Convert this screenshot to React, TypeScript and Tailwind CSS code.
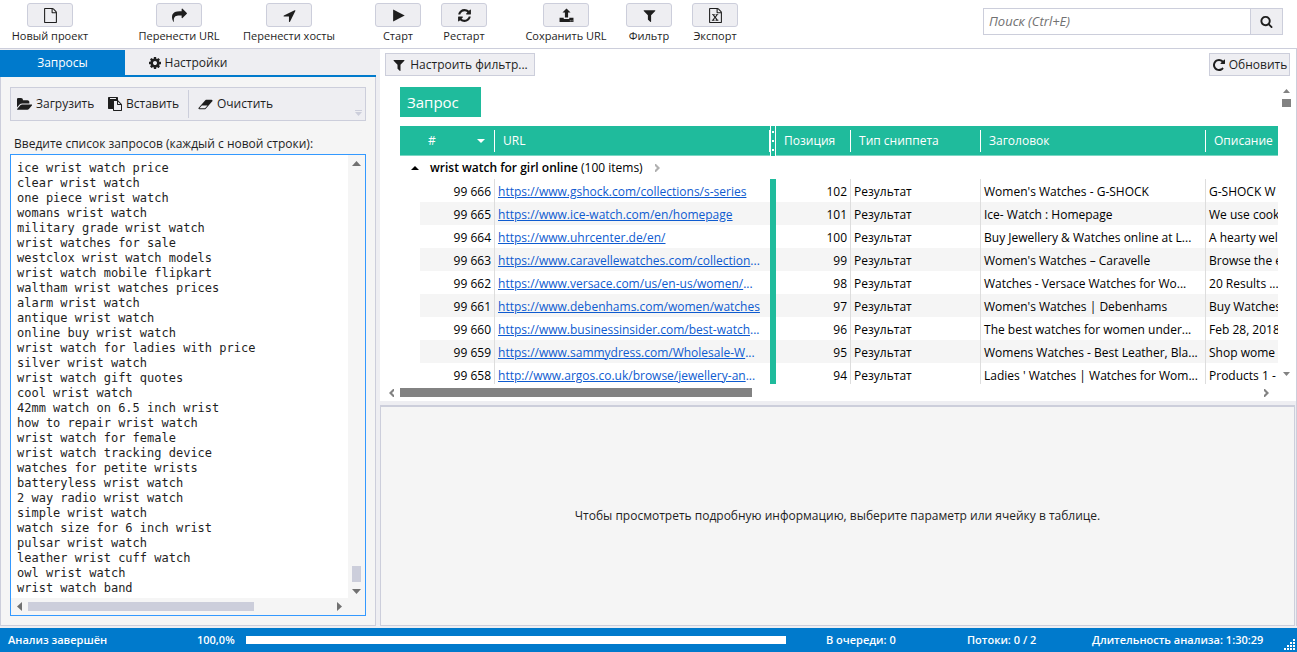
import React from 'react';
import clsx from 'clsx';

interface IconProps {
  d: string;
  size?: number;
  viewBox?: string;
}

const Icon = ({ d, size = 14, viewBox = '0 0 1792 1792' }: IconProps) => (
  <svg width={size} height={size} viewBox={viewBox} fill="currentColor" className="shrink-0" aria-hidden="true">
    <path d={d} />
  </svg>
);

const ICONS = {
  file: 'M1596 380q28 28 48 76t20 88v1152q0 40-28 68t-68 28h-1344q-40 0-68-28t-28-68v-1600q0-40 28-68t68-28h896q40 0 88 20t76 48zm-444-244v376h376q-10-29-22-41l-313-313q-12-12-41-22zm384 1528v-1024h-416q-40 0-68-28t-28-68v-416h-768v1536h1280z',
  excel: 'M1596 380q28 28 48 76t20 88v1152q0 40-28 68t-68 28h-1344q-40 0-68-28t-28-68v-1600q0-40 28-68t68-28h896q40 0 88 20t76 48zm-444-244v376h376q-10-29-22-41l-313-313q-12-12-41-22zm384 1528v-1024h-416q-40 0-68-28t-28-68v-416h-768v1536h1280zM480 740h330v110h-70l120 170 120-170h-70v-110h310v110h-80l-200 265 215 285h85v110h-340v-110h80l-140-195-140 195h80v110h-320v-110h85l215-285-200-265h-80z',
  share: 'M1792 640q0 26-19 45l-512 512q-19 19-45 19t-45-19-19-45v-256h-224q-98 0-175.5 6t-154 21.5-133 42.5-105.5 69.5-80 101-48.5 138.5-17.5 181q0 55 5 123 0 6 2.5 23.5t2.5 26.5q0 15-8.5 25t-23.5 10q-16 0-28-17-7-9-13-22t-13.5-30-10.5-24q-127-285-127-451 0-199 53-333 162-403 875-403h224v-256q0-26 19-45t45-19 45 19l512 512q19 19 19 45z',
  arrow: 'M1593 349l-640 1280q-17 35-57 35-5 0-15-2-22-5-35.5-22.5t-13.5-39.5v-576h-576q-22 0-39.5-13.5t-22.5-35.5 4-42 29-30l1280-640q13-7 29-7 27 0 45 19 15 14 18.5 34.5t-6.5 39.5z',
  play: 'M256 180L1640 896L256 1612Z',
  refresh: 'M1639 1056q0 5-1 7-64 268-268 434.5t-478 166.5q-146 0-282.5-55t-243.5-157l-129 129q-19 19-45 19t-45-19-19-45v-448q0-26 19-45t45-19h448q26 0 45 19t19 45-19 45l-137 137q71 66 161 102t187 36q134 0 250-65t186-179q11-17 53-117 8-23 30-23h192q13 0 22.5 9.5t9.5 22.5zm25-800v448q0 26-19 45t-45 19h-448q-26 0-45-19t-19-45 19-45l138-138q-148-137-349-137-134 0-250 65t-186 179q-11 17-53 117-8 23-30 23h-199q-13 0-22.5-9.5t-9.5-22.5v-7q65-268 270-434.5t480-166.5q146 0 284 55.5t245 156.5l130-129q19-19 45-19t45 19 19 45z',
  upload: 'M64 1160h500v100q0 60 60 60h544q60 0 60-60v-100h500v504h-1664zm1230 320v110h110v-110zm210 0v110h110v-110zM896 64l480 480h-290v600h-380v-600h-290z',
  filter: 'M1595 295q17 41-14 70l-493 493v742q0 42-39 59-13 5-25 5-27 0-45-19l-256-256q-19-19-19-45v-486l-493-493q-31-29-14-70 17-39 59-39h1280q42 0 59 39z',
  search: 'M1216 832q0-185-131.5-316.5t-316.5-131.5-316.5 131.5-131.5 316.5 131.5 316.5 316.5 131.5 316.5-131.5 131.5-316.5zm512 832q0 52-38 90t-90 38q-54 0-90-38l-343-342q-179 124-399 124-143 0-273.5-55.5t-225-150-150-225-55.5-273.5 55.5-273.5 150-225 225-150 273.5-55.5 273.5 55.5 225 150 150 225 55.5 273.5q0 220-124 399l343 343q37 37 37 90z',
  cog: 'M1152 896q0-106-75-181t-181-75-181 75-75 181 75 181 181 75 181-75 75-181zm512-109v222q0 12-8 23t-20 13l-185 28q-19 54-39 91 35 50 107 138 10 12 10 25t-9 23q-27 37-99 108t-94 71q-12 0-26-9l-138-108q-44 23-91 38-16 136-29 186-7 28-36 28h-222q-14 0-24.5-8.5t-11.5-21.5l-28-184q-49-16-90-37l-141 107q-10 9-25 9-14 0-25-11-126-114-165-168-7-10-7-23 0-12 8-23 15-21 51-66.5t54-70.5q-27-50-41-99l-183-27q-13-2-21-12.5t-8-23.5v-222q0-12 8-23t19-13l186-28q14-46 39-92-40-57-107-138-10-12-10-24 0-10 9-23 26-36 98.5-107.5t94.5-71.5q13 0 26 10l138 107q44-23 91-38 16-136 29-186 7-28 36-28h222q14 0 24.5 8.5t11.5 21.5l28 184q49 16 90 37l142-107q9-9 24-9 13 0 25 10 129 119 165 170 7 8 7 22 0 12-8 23-15 21-51 66.5t-54 70.5q26 50 41 98l183 28q13 2 21 12.5t8 23.5z',
  folder: 'M1815 952q0 31-31 66l-336 396q-43 51-120.5 86.5t-143.5 35.5h-1088q-34 0-60.5-13t-26.5-43q0-31 31-66l336-396q43-51 120.5-86.5t143.5-35.5h1088q34 0 60.5 13t26.5 43zm-343-344v160h-832q-94 0-197 47.5t-164 119.5l-337 396-5 6q0-4-.5-12.5t-.5-12.5v-960q0-92 66-158t158-66h320q92 0 158 66t66 158v32h544q92 0 158 66t66 158z',
  paste: 'M768 1664h896v-640h-416q-40 0-68-28t-28-68v-416h-384v1152zm256-1440v-64q0-13-9.5-22.5t-22.5-9.5h-704q-13 0-22.5 9.5t-9.5 22.5v64q0 13 9.5 22.5t22.5 9.5h704q13 0 22.5-9.5t9.5-22.5zm256 672h299l-299-299v299zm512 128v672q0 40-28 68t-68 28h-960q-40 0-68-28t-28-68v-160h-544q-40 0-68-28t-28-68v-1344q0-40 28-68t68-28h1088q40 0 68 28t28 68v328q21 13 36 28l408 408q28 28 48 76t20 88z',
  eraser: 'M960 1408l336-384h-768l-336 384h768zm1013-1077q15 34 9.5 71.5t-30.5 65.5l-896 1024q-38 44-96 44h-768q-38 0-69.5-20.5t-47.5-54.5q-15-34-9.5-71.5t30.5-65.5l896-1024q38-44 96-44h768q38 0 69.5 20.5t47.5 54.5z',
  redo: 'M1664 256v448q0 26-19 45t-45 19h-448q-42 0-59-40-17-39 14-69l138-138q-148-137-349-137-104 0-198.5 40.5t-163.5 109.5-109.5 163.5-40.5 198.5 40.5 198.5 109.5 163.5 163.5 109.5 198.5 40.5q119 0 225-52t179-147q7-10 23-12 15 0 25 9l137 138q9 8 9.5 20.5t-7.5 22.5q-109 132-264 204.5t-327 72.5q-156 0-298-61t-245-164-164-245-61-298 61-298 164-245 245-164 298-61q147 0 284.5 55.5t244.5 156.5l130-129q29-31 70-14 39 17 39 59z',
};

const TOOLBAR = [
  { label: 'Новый проект', icon: ICONS.file, box: 'w-[76px] ml-3' },
  { label: 'Перенести URL', icon: ICONS.share, box: 'w-[78px] ml-[52px]' },
  { label: 'Перенести хосты', icon: ICONS.arrow, box: 'w-[88px] ml-[27px]' },
  { label: 'Старт', icon: ICONS.play, box: 'w-[46px] ml-[42px]' },
  { label: 'Рестарт', icon: ICONS.refresh, box: 'w-[46px] ml-5' },
  { label: 'Сохранить URL', icon: ICONS.upload, box: 'w-[78px] ml-10' },
  { label: 'Фильтр', icon: ICONS.filter, box: 'w-[46px] ml-[21px]' },
  { label: 'Экспорт', icon: ICONS.excel, box: 'w-[46px] ml-5' },
];

const QUERIES = [
  'ice wrist watch price',
  'clear wrist watch',
  'one piece wrist watch',
  'womans wrist watch',
  'military grade wrist watch',
  'wrist watches for sale',
  'westclox wrist watch models',
  'wrist watch mobile flipkart',
  'waltham wrist watches prices',
  'alarm wrist watch',
  'antique wrist watch',
  'online buy wrist watch',
  'wrist watch for ladies with price',
  'silver wrist watch',
  'wrist watch gift quotes',
  'cool wrist watch',
  '42mm watch on 6.5 inch wrist',
  'how to repair wrist watch',
  'wrist watch for female',
  'wrist watch tracking device',
  'watches for petite wrists',
  'batteryless wrist watch',
  '2 way radio wrist watch',
  'simple wrist watch',
  'watch size for 6 inch wrist',
  'pulsar wrist watch',
  'leather wrist cuff watch',
  'owl wrist watch',
  'wrist watch band',
];

interface ResultRow {
  id: string;
  url: string;
  cut?: boolean;
  position: number;
  title: string;
  description: string;
}

const ROWS: ResultRow[] = [
  { id: '99 666', url: 'https://www.gshock.com/collections/s-series', position: 102, title: "Women's Watches - G-SHOCK", description: 'G-SHOCK W' },
  { id: '99 665', url: 'https://www.ice-watch.com/en/homepage', position: 101, title: 'Ice- Watch : Homepage', description: 'We use cook' },
  { id: '99 664', url: 'https://www.uhrcenter.de/en/', position: 100, title: 'Buy Jewellery & Watches online at L...', description: 'A hearty wel' },
  { id: '99 663', url: 'https://www.caravellewatches.com/collection', cut: true, position: 99, title: "Women's Watches – Caravelle", description: 'Browse the e' },
  { id: '99 662', url: 'https://www.versace.com/us/en-us/women/', cut: true, position: 98, title: 'Watches - Versace Watches for Wo...', description: '20 Results ...' },
  { id: '99 661', url: 'https://www.debenhams.com/women/watches', position: 97, title: "Women's Watches | Debenhams", description: 'Buy Watches' },
  { id: '99 660', url: 'https://www.businessinsider.com/best-watch', cut: true, position: 96, title: 'The best watches for women under...', description: 'Feb 28, 2018' },
  { id: '99 659', url: 'https://www.sammydress.com/Wholesale-W', cut: true, position: 95, title: 'Womens Watches - Best Leather, Bla...', description: 'Shop wome' },
  { id: '99 658', url: 'http://www.argos.co.uk/browse/jewellery-an', cut: true, position: 94, title: "Ladies ' Watches | Watches for Wom...", description: 'Products 1 -' },
];

const Triangle = ({ points, width, height, className }: { points: string; width: number; height: number; className?: string }) => (
  <svg width={width} height={height} viewBox={`0 0 ${width} ${height}`} className={clsx('shrink-0 fill-current', className)} aria-hidden="true">
    <polygon points={points} />
  </svg>
);

// Small arrow with a notched base, used by the grid scrollbars and the group row
const Chevron = ({ side, className }: { side: 'left' | 'right'; className?: string }) => (
  <Triangle
    points={side === 'left' ? '5,0 5,2 3,4 5,6 5,8 4,8 0,4 4,0' : '0,0 0,2 2,4 0,6 0,8 1,8 5,4 1,0'}
    width={5}
    height={8}
    className={className}
  />
);

const Toolbar = () => (
  <header className="flex h-[49px] shrink-0 items-start border-b border-[#cccedb] bg-white pt-[3px]">
    {TOOLBAR.map((item) => (
      <button key={item.label} type="button" className={clsx('flex shrink-0 flex-col items-center', item.box)}>
        <span className="flex h-6 w-[46px] items-center justify-center rounded-[3px] border border-[#cccedb] bg-[#eeeef2]">
          <Icon d={item.icon} size={15} />
        </span>
        <span className="text-[11px] leading-[18px] whitespace-nowrap">{item.label}</span>
      </button>
    ))}
    <form className="mt-[5px] mr-[14px] ml-auto flex h-[27px] w-[300px]">
      <input
        type="search"
        aria-label="Поиск"
        placeholder="Поиск (Ctrl+E)"
        className="min-w-0 flex-1 border border-[#cccedb] bg-white px-[5px] text-[13px] italic outline-none placeholder:text-[#717171]"
      />
      <button type="button" aria-label="Найти" className="flex w-8 items-center justify-center border border-l-0 border-[#cccedb] bg-[#eeeef2]">
        <Icon d={ICONS.search} size={13} />
      </button>
    </form>
  </header>
);

const QueriesPanel = () => (
  <aside className="flex w-[376px] shrink-0 flex-col">
    <div role="tablist" className="mt-px flex h-[27px] shrink-0 border-b-2 border-[#007acc] text-[12px]">
      <button type="button" role="tab" aria-selected="true" className="w-[125px] bg-[#007acc] text-white">
        Запросы
      </button>
      <button type="button" role="tab" aria-selected="false" className="flex w-[125px] items-center justify-center gap-[3px]">
        <Icon d={ICONS.cog} />
        Настройки
      </button>
    </div>
    <div className="flex flex-1 flex-col border border-t-0 border-[#cccedb] bg-[#f5f5f5] px-[9px] pt-[10px] pb-[9px]">
      <div className="flex h-[34px] shrink-0 items-center border border-[#cccedb] bg-[#eeeef2] pl-1.5 text-[12px]">
        <button type="button" className="flex w-[91px] items-center gap-1 whitespace-nowrap">
          <Icon d={ICONS.folder} size={15} />
          Загрузить
        </button>
        <button type="button" className="flex w-20 items-center gap-1 whitespace-nowrap">
          <Icon d={ICONS.paste} />
          Вставить
        </button>
        <span className="h-7 border-l border-[#cccedb]" />
        <button type="button" className="ml-[9px] flex items-center gap-1 whitespace-nowrap">
          <Icon d={ICONS.eraser} size={15} viewBox="0 0 2048 1792" />
          Очистить
        </button>
        <svg width="7" height="6" viewBox="0 0 7 6" className="mt-auto mr-[3px] mb-1 ml-auto fill-[#cccedb]" aria-hidden="true">
          <path d="M0 0h7v1H0zM0 2h7L3.500 6z" />
        </svg>
      </div>
      <label htmlFor="queries" className="mt-[13px] pl-1 text-[12px] leading-5">
        Введите список запросов (каждый с новой строки):
      </label>
      <div className="flex flex-1 flex-col border border-[#3399ff] bg-[#f5f5f5] text-[#717171]">
        <div className="flex flex-1">
          <textarea
            id="queries"
            rows={29}
            wrap="off"
            defaultValue={QUERIES.join('\n')}
            className="block flex-1 resize-none overflow-hidden bg-white pt-1.5 pb-0.5 pl-1.5 font-['DejaVu_Sans_Mono',monospace] text-[12px] leading-[15px] text-[#1e1e1e] outline-none"
          />
          <div className="flex w-[17px] flex-col items-center pt-1.5 pb-1">
            <Triangle points="4.5,0 9,5 0,5" width={9} height={5} />
            <div className="mt-auto mb-[7px] h-4 w-[9px] bg-[#cccedb]" />
            <Triangle points="0,0 9,0 4.5,5" width={9} height={5} />
          </div>
        </div>
        <div className="flex h-[17px] items-center pr-[23px] pl-1.5">
          <Triangle points="5,0 5,9 0,4.5" width={5} height={9} />
          <div className="ml-1.5 h-[9px] w-[226px] bg-[#cccedb]" />
          <Triangle points="0,0 5,4.5 0,9" width={5} height={9} className="ml-auto" />
        </div>
      </div>
    </div>
  </aside>
);

const HeaderCell = ({ label, last }: { label: string; last?: boolean }) => (
  <th className="border-b border-[#7ad6c3] p-0 text-left font-normal">
    <div className={clsx('flex h-[22px] items-center pl-2 whitespace-nowrap', !last && 'border-r border-white')}>{label}</div>
  </th>
);

const ResultsTable = () => (
  <div className="h-[258px] min-w-0 flex-1 overflow-hidden">
    <table className="w-full table-fixed border-separate border-spacing-0 text-[12px] text-black">
      <colgroup>
        <col className="w-5" />
        <col className="w-[75px]" />
        <col className="w-[275px]" />
        <col className="w-1.5" />
        <col className="w-[75px]" />
        <col className="w-[130px]" />
        <col className="w-[225px]" />
        <col />
      </colgroup>
      <thead>
        <tr className="h-[30px] bg-[#1fbb9c] text-white">
          <th colSpan={2} className="border-b border-[#7ad6c3] p-0 font-normal">
            <div className="flex h-[22px] items-center border-r border-white pr-[9px] pl-7">
              #
              <Triangle points="0,0 8,0 4,4" width={8} height={4} className="ml-auto" />
            </div>
          </th>
          <HeaderCell label="URL" />
          <th className="border-x border-white p-0">
            <div className="flex flex-col items-center gap-[7px]">
              <span className="h-0.5 w-0.5 bg-white" />
              <span className="h-0.5 w-0.5 bg-white" />
              <span className="h-0.5 w-0.5 bg-white" />
            </div>
          </th>
          <HeaderCell label="Позиция" />
          <HeaderCell label="Тип сниппета" />
          <HeaderCell label="Заголовок" />
          <HeaderCell label="Описание" last />
        </tr>
      </thead>
      <tbody>
        <tr className="h-[23px]">
          <td colSpan={8} className="p-0">
            <div className="flex items-center pl-[11px] whitespace-nowrap">
              <Triangle points="4,0 8,4 0,4" width={8} height={4} />
              <b className="ml-[11px] font-semibold">wrist watch for girl online</b>
              <span className="ml-[3px]">(100 items)</span>
              <Chevron side="right" className="ml-3 text-[#b0b0b0]" />
            </div>
          </td>
        </tr>
        {ROWS.map((row, i) => {
          const stripe = i % 2 === 1 && 'bg-[#f5f5f5]';
          return (
            <tr key={row.id} className="h-[23px] leading-5 whitespace-nowrap">
              <td className="p-0" />
              <td className={clsx('border-r border-[#dddddd] p-0 pt-0.5 pr-[3px] text-right', stripe)}>{row.id}</td>
              <td className={clsx('overflow-hidden p-0 pt-0.5 pl-[3px] text-[#0e5bd0]', stripe)}>
                <a href={row.url} className="underline">{row.url}</a>
                {row.cut && '...'}
              </td>
              <td className="bg-[#1fbb9c] p-0" />
              <td className={clsx('border-r border-[#dddddd] p-0 pt-0.5 pr-[3px] text-right', stripe)}>{row.position}</td>
              <td className={clsx('border-r border-[#dddddd] p-0 pt-0.5 pl-[3px]', stripe)}>Результат</td>
              <td className={clsx('overflow-hidden border-r border-[#dddddd] p-0 pt-0.5 pl-[3px]', stripe)}>{row.title}</td>
              <td className={clsx('overflow-hidden p-0 pt-0.5 pl-[3px]', stripe)}>{row.description}</td>
            </tr>
          );
        })}
      </tbody>
    </table>
  </div>
);

const ResultsPanel = () => (
  <section className="flex shrink-0 flex-col bg-white pb-1">
    <div className="flex justify-between pt-1 pr-1.5 pl-[5px] text-[12px]">
      <button type="button" className="flex h-[23px] w-[150px] items-center justify-center gap-1 border border-[#cccedb] bg-[#eeeef2] whitespace-nowrap">
        <Icon d={ICONS.filter} />
        Настроить фильтр...
      </button>
      <button type="button" className="flex h-[23px] w-[81px] items-center justify-center gap-[3px] border border-[#cccedb] bg-[#eeeef2] whitespace-nowrap">
        <Icon d={ICONS.redo} />
        Обновить
      </button>
    </div>
    <div className="flex pt-[11px] pr-px pl-5">
      <div className="min-w-0 flex-1">
        <button type="button" className="mb-[9px] flex h-[30px] w-[81px] items-center bg-[#1fbb9c] pl-[7px] text-[15px] text-white">
          Запрос
        </button>
        <ResultsTable />
      </div>
      <div className="flex w-[17px] flex-col items-center pt-0.5 pb-2 text-[#828282]">
        <Triangle points="3.5,0 7,4 0,4" width={7} height={4} />
        <div className="mt-1.5 h-2 w-[9px] bg-[#828282]" />
        <Triangle points="0,0 7,0 3.5,4" width={7} height={4} className="mt-auto" />
      </div>
    </div>
    <div className="mt-1 flex h-[9px] items-center pr-[27px] pl-[9px] text-[#828282]">
      <Chevron side="left" />
      <div className="ml-1.5 h-[9px] w-[352px] bg-[#828282]" />
      <Chevron side="right" className="ml-auto" />
    </div>
  </section>
);

const StatusBar = () => (
  <footer className="flex h-6 shrink-0 items-center bg-[#007acc] pl-2 text-[11px] font-semibold whitespace-nowrap text-white">
    <span className="w-[189px]">Анализ завершён</span>
    <span className="w-[49px]">100,0%</span>
    <div role="progressbar" aria-label="Анализ" aria-valuenow={100} className="h-2 flex-1 bg-white" />
    <span className="ml-10 w-[141px]">В очереди: 0</span>
    <span className="w-[125px]">Потоки: 0 / 2</span>
    <span className="w-[192px]">Длительность анализа: 1:30:29</span>
    <svg width="11" height="11" viewBox="0 0 11 11" fill="white" className="mr-0.5 mb-0.5 self-end" aria-hidden="true">
      <path d="M9 0h2v2h-2zM6 3h2v2h-2zM9 3h2v2h-2zM3 6h2v2h-2zM6 6h2v2h-2zM9 6h2v2h-2zM0 9h2v2h-2zM3 9h2v2h-2zM6 9h2v2h-2zM9 9h2v2h-2z" />
    </svg>
  </footer>
);

const App = () => {
  return (
    <div className="flex min-h-screen flex-col bg-[#eeeef2] font-['Open_Sans','Noto_Sans',sans-serif] text-[#1e1e1e]">
      <Toolbar />
      <div className="flex flex-1 gap-1 pb-0.5">
        <QueriesPanel />
        <main className="flex min-w-0 flex-1 flex-col border-r border-[#cccedb]">
          <ResultsPanel />
          <section className="mt-1 mr-px flex flex-1 items-center justify-center border border-t-2 border-[#cccedb] bg-[#f5f5f5] text-[12px]">
            Чтобы просмотреть подробную информацию, выберите параметр или ячейку в таблице.
          </section>
        </main>
      </div>
      <StatusBar />
    </div>
  );
};

export default App;
